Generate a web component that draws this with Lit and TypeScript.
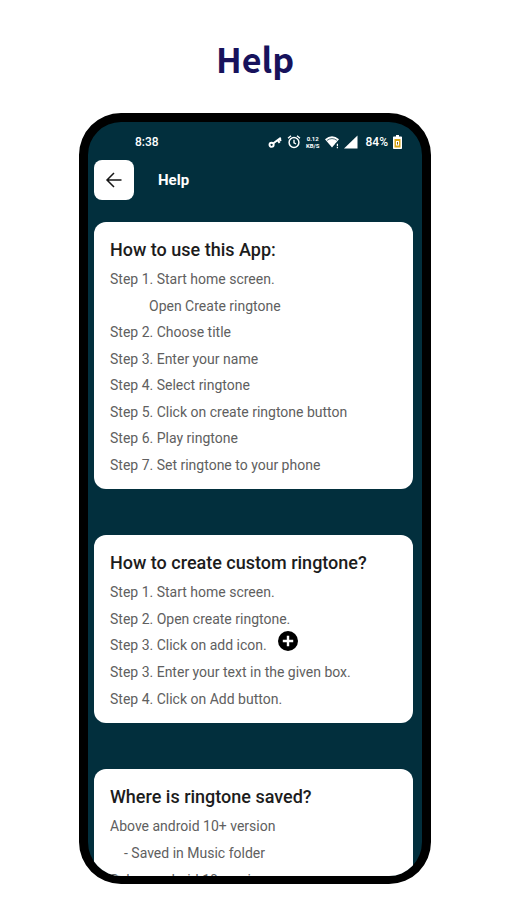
import { LitElement, html, css, nothing } from "lit";
import { customElement, property } from "lit/decorators.js";

interface Step {
  text: string;
  indent?: "small" | "large";
  addIcon?: boolean;
}

interface Topic {
  title: string;
  steps: Step[];
}

const TOPICS: Topic[] = [
  {
    title: "How to use this App:",
    steps: [
      { text: "Step 1. Start home screen." },
      { text: "Open Create ringtone", indent: "large" },
      { text: "Step 2. Choose title" },
      { text: "Step 3. Enter your name" },
      { text: "Step 4. Select ringtone" },
      { text: "Step 5. Click on create ringtone button" },
      { text: "Step 6. Play ringtone" },
      { text: "Step 7. Set ringtone to your phone" },
    ],
  },
  {
    title: "How to create custom ringtone?",
    steps: [
      { text: "Step 1. Start home screen." },
      { text: "Step 2. Open create ringtone." },
      { text: "Step 3. Click on add icon.", addIcon: true },
      { text: "Step 3. Enter your text in the given box." },
      { text: "Step 4. Click on Add button." },
    ],
  },
  {
    title: "Where is ringtone saved?",
    steps: [
      { text: "Above android 10+ version" },
      { text: "- Saved in Music folder", indent: "small" },
      { text: "Below android 10 version" },
    ],
  },
];

@customElement("help-card")
export class HelpCard extends LitElement {
  @property({ attribute: false }) topic!: Topic;

  static styles = css`
    :host {
      display: block;
      flex: none;
    }
    .card {
      box-sizing: border-box;
      background: #fff;
      border-radius: 12px;
      padding: 14px 16px 11px;
    }
    .title {
      margin: 0 0 2px;
      font-size: 18px;
      line-height: 28px;
      font-weight: 500;
      color: #1c1c1c;
      white-space: nowrap;
    }
    .steps {
      list-style: none;
      margin: 0;
      padding: 0;
      display: grid;
      grid-auto-rows: 1fr;
    }
    .eight { min-height: 212px; }
    .five { min-height: 133px; }
    .three { min-height: 80px; }
    .step {
      display: flex;
      align-items: center;
      font-size: 14px;
      line-height: 26px;
      font-weight: 400;
      color: #606060;
      white-space: nowrap;
    }
    .small { padding-left: 14px; }
    .large { padding-left: 39px; }
    .add {
      width: 20px;
      height: 20px;
      margin: -8px 0 0 11px;
    }
  `;

  render() {
    const { title, steps } = this.topic;
    const size = steps.length === 8 ? "eight" : steps.length === 5 ? "five" : "three";
    return html`
      <section class="card">
        <h2 class="title">${title}</h2>
        <ul class="steps ${size}">
          ${steps.map(
            (s) => html`<li class="step ${s.indent ?? ""}">
              <span>${s.text}</span>
              ${s.addIcon
                ? html`<svg class="add" viewBox="0 0 20 20" aria-label="Add">
                    <circle cx="10" cy="10" r="10" fill="#000" />
                    <path d="M10 4.8v10.4M4.8 10h10.4" stroke="#fff" stroke-width="2.4" />
                  </svg>`
                : nothing}
            </li>`
          )}
        </ul>
      </section>
    `;
  }
}

@customElement("app-root")
export class AppRoot extends LitElement {
  static styles = css`
    :host {
      display: flex;
      flex-direction: column;
      align-items: center;
      box-sizing: border-box;
      height: 100vh;
      padding: 33px 77px 16px 79px;
      background: #fff;
      font-family: Roboto, sans-serif;
    }
    .headline {
      margin: 0 0 28px;
      font-family: "Noto Sans CJK JP", "Noto Sans", sans-serif;
      font-size: 34px;
      line-height: 52px;
      font-weight: 700;
      color: #17125c;
    }
    .phone {
      box-sizing: border-box;
      width: 100%;
      flex: 1;
      min-height: 0;
      display: flex;
      flex-direction: column;
      overflow: hidden;
      border: 9px solid #000;
      border-bottom-width: 8px;
      border-radius: 42px;
      background: #022f3d;
      color: #fff;
    }
    .status {
      flex: none;
      display: flex;
      align-items: center;
      height: 20px;
      margin: 10px 20px 0 47px;
      font-size: 12px;
      font-weight: 500;
      line-height: 20px;
    }
    .icons {
      margin-left: auto;
      display: flex;
      align-items: center;
      gap: 5px;
    }
    .icon {
      display: block;
      height: 16px;
    }
    .rate {
      display: flex;
      flex-direction: column;
      font-size: 6px;
      line-height: 7px;
      font-weight: 700;
      text-align: center;
    }
    .percent { margin-left: 3px; }
    .bar {
      flex: none;
      display: flex;
      align-items: center;
      gap: 24px;
      padding: 8px 6px 0;
    }
    .back {
      display: grid;
      place-items: center;
      width: 40px;
      height: 40px;
      padding: 0;
      border: 0;
      border-radius: 8px;
      background: #fff;
    }
    .name {
      margin: 0;
      font-size: 15px;
      line-height: 20px;
      font-weight: 700;
    }
    .content {
      flex: 1;
      min-height: 0;
      overflow: hidden;
      display: flex;
      flex-direction: column;
      gap: 46px;
      padding: 22px 9px 0 6px;
    }
  `;

  render() {
    return html`
      <h1 class="headline">Help</h1>
      <main class="phone">
        <div class="status">
          <span>8:38</span>
          <div class="icons">
            <svg class="icon" width="14" viewBox="0 0 14 16" fill="none" stroke="#fff">
              <circle cx="3.6" cy="10.8" r="2.1" stroke-width="1.9" />
              <path d="M5.4 9.2L12.8 3.8M9.6 6.2l2 2.6M11.4 4.8l1.6 2" stroke-width="2" />
            </svg>
            <svg class="icon" width="14" viewBox="0 0 14 16" fill="none" stroke="#fff">
              <circle cx="7" cy="8.5" r="4.9" stroke-width="1.5" />
              <path d="M7 5.8v3l2 1.2M1 4.2L4 1.8M13 4.2L10 1.8" stroke-width="1.4" />
            </svg>
            <span class="rate"><span>0.12</span><span>KB/S</span></span>
            <svg class="icon" width="14" viewBox="0 0 14 16">
              <path d="M0 5.2Q7-.8 14 5.2L7 13.5z" fill="#fff" />
              <path d="M2 6.4Q7 2.8 12 6.4" fill="none" stroke="#022f3d" stroke-width=".7" />
              <path d="M10.4 9.5h3.6v5h-3.6z" fill="#022f3d" />
              <path d="M12.4 9.8v2.4M12.4 13v1.2" stroke="#fff" stroke-width="1.2" />
            </svg>
            <svg class="icon" width="14" viewBox="0 0 14 16">
              <path d="M13.5 1.5v13H0z" fill="#fff" />
            </svg>
            <span class="percent">84%</span>
            <svg class="icon" width="9" viewBox="0 0 9 16">
              <path d="M3 1h3v1.5h2.2q.8 0 .8.8v10.9q0 .8-.8.8H.8q-.8 0-.8-.8V3.3q0-.8.8-.8H3z" fill="#fff" />
              <path d="M1.5 5h6v8.5h-6z" fill="#d9a514" />
              <path d="M3 7h3v4.5H3z" fill="#fff" />
              <path d="M4 8h1v2.5H4z" fill="#7d6420" />
            </svg>
          </div>
        </div>
        <header class="bar">
          <button class="back" aria-label="Back">
            <svg width="20" height="20" viewBox="0 0 20 20" fill="none" stroke="#161616" stroke-width="1.5">
              <path d="M17.5 10H3.5M10 3L3 10l7 7" />
            </svg>
          </button>
          <h2 class="name">Help</h2>
        </header>
        <div class="content">
          ${TOPICS.map((t) => html`<help-card .topic=${t}></help-card>`)}
        </div>
      </main>
    `;
  }
}
